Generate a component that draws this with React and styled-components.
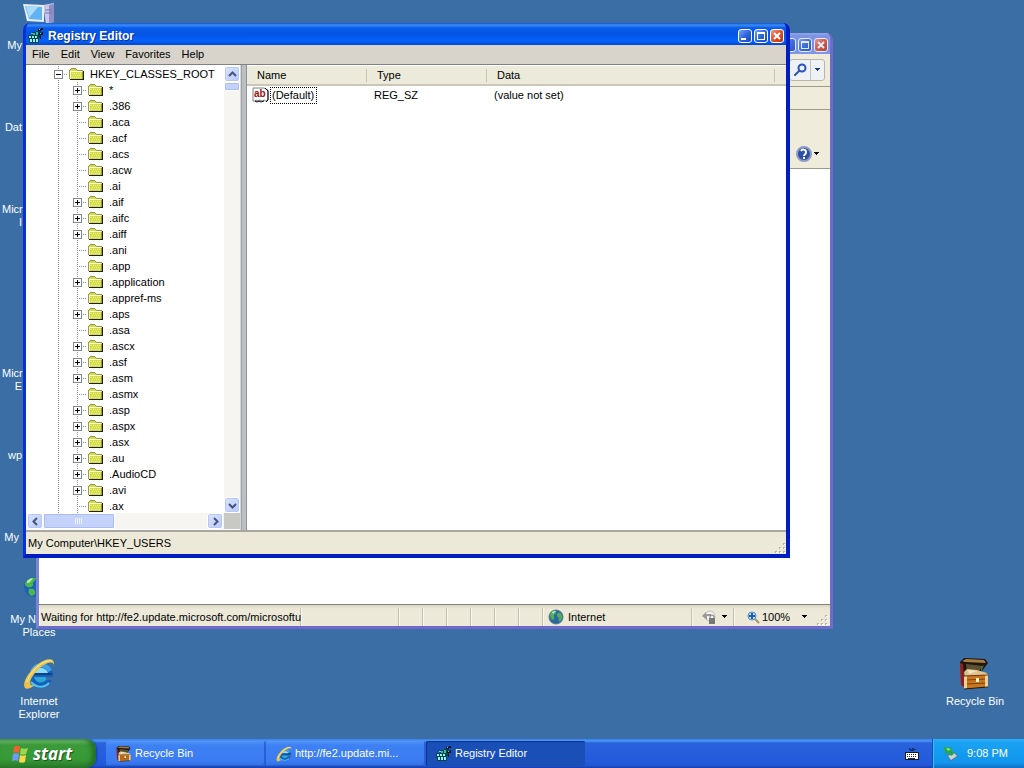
import React, { useState } from 'react';
import styled, { createGlobalStyle } from 'styled-components';

const GlobalStyle = createGlobalStyle`
    * {
        box-sizing: border-box;
    }

    body {
        margin: 0;
        overflow: hidden;
        font-family: "Liberation Sans", Arial, sans-serif;
        font-size: 11px;
        line-height: 13px;
        color: #000000;
    }

    button {
        margin: 0;
        padding: 0;
        border: 0;
        background: none;
        font: inherit;
        color: inherit;
    }
`

const Screen = styled.div`
    display: flex;
    flex-direction: column;
    height: 100vh;
`
const Desktop = styled.main`
    position: relative;
    flex: 1;
    display: flex;
    justify-content: space-between;
    min-height: 0;
    padding: 2px 12px 0 2px;
    overflow: hidden;
    background-color: #3a6ea5;
`
const IconColumn = styled.div`
    display: grid;
    grid-auto-rows: 82px;
    grid-template-columns: 74px;
`
const Shortcut = styled.button`
    grid-row: ${(props) => props.$row || "auto"};
    display: flex;
    flex-direction: column;
    align-items: center;
    color: #ffffff;
    text-align: center;
    white-space: pre;

    svg {
        flex: none;
        margin-bottom: 5px;
    }
`
const Blank = styled.span`
    flex: none;
    height: 37px;
`
const ShortLabel = styled.span`
    align-self: flex-start;
    width: ${(props) => props.width};
    text-align: right;
`

/* windows */
const Window = styled.section`
    position: absolute;
    display: flex;
    flex-direction: column;
    border-radius: 7px 7px 0 0;
    overflow: hidden;
    background-color: #ece9d8;
`
const RegistryWindow = styled(Window)`
    top: 23px;
    left: 23px;
    right: 234px;
    bottom: 181px;
    border-style: solid;
    border-width: 0 4px 4px 3px;
    border-color: #0831d9 #001ec0 #001ec0 #0831d9;
    background-color: #0855dd;
`
const BrowserWindow = styled(Window)`
    top: 33px;
    left: 36px;
    right: 191px;
    bottom: 110px;
    border-style: solid;
    border-width: 0 3px 3px 3px;
    border-color: #7577d4 #6f6acc #6f6acc #7b84dc;
`
const TitleBar = styled.header`
    flex: none;
    display: flex;
    align-items: center;
    gap: 4px;
    height: ${(props) => (props.$faded ? "21px" : "22px")};
    padding: 3px 2px 0 2px;
    background: ${(props) => (props.$faded
        ? "linear-gradient(#8fa5ea 0, #7d93e2 3px, #7a92e2 15px, #8098e8 100%)"
        : "linear-gradient(#0b57d8 0, #3c8cf8 2px, #0a5ce8 5px, #0454e4 11px, #0662fb 18px, #0347cc 100%)")};
`
const Title = styled.h1`
    flex: 1;
    margin: 0;
    font-size: 12px;
    line-height: 16px;
    font-weight: bold;
    color: #ffffff;
    text-shadow: 1px 1px 0 #0a2f86;
`
const Captions = styled.div`
    display: flex;
    gap: 2px;
    margin-left: auto;
    opacity: ${(props) => (props.$faded ? 0.8 : 1)};
`
const CaptionButton = styled.button`
    display: flex;
    align-items: center;
    justify-content: center;
    width: 14px;
    height: 14px;
    border: 1px solid #ffffff;
    border-radius: 3px;
    background: ${(props) => (props.$close
        ? "linear-gradient(135deg, #f09a80, #dd4f26 50%, #b83410)"
        : "linear-gradient(135deg, #7ba2f2, #2f66dd 50%, #1848c0)")};
`
const MenuBar = styled.nav`
    flex: none;
    display: flex;
    align-items: center;
    gap: 11px;
    height: 20px;
    padding: 0 5px 1px 6px;
    border-bottom: 1px solid #808080;
    background-color: #d8d4cb;
`
const Panes = styled.div`
    flex: 1;
    display: flex;
    min-height: 0;
    border-bottom: 2px solid #a8a69e;
    background-color: #c4c3c0;
`
const TreePane = styled.div`
    flex: none;
    display: grid;
    grid-template-columns: 1fr 16px;
    grid-template-rows: 1fr 16px;
    width: 215px;
    padding: 1px 0;
    background-color: #ffffff;
    border-right: 1px solid #d8d8d8;
`
const Tree = styled.ul`
    margin: 0;
    padding: 0 0 0 23px;
    min-height: 0;
    overflow: hidden;
    list-style: none;
`
const TreeRow = styled.li`
    display: flex;
    align-items: center;
    height: 16px;
    white-space: nowrap;
`
const Branch = styled.span`
    flex: none;
    display: flex;
    align-items: center;
    justify-content: center;
    width: 19px;
    height: 16px;
    background-image:
        repeating-linear-gradient(#909090 0 1px, transparent 1px 2px),
        repeating-linear-gradient(90deg, #909090 0 1px, transparent 1px 2px);
    background-repeat: no-repeat;
    background-position: 9px 0, 9px 8px;
    background-size: 1px 100%, ${(props) => (props.$through ? "0 0" : "10px 1px")};
`
const Expander = styled.button`
    display: flex;
    width: 9px;
    height: 9px;
`
const TreeLabel = styled.span`
    padding-left: 5px;
`
const FolderSlot = styled.span`
    display: flex;
    width: 17px;
    padding-left: 1px;
`
const ScrollTrack = styled.div`
    display: flex;
    flex-direction: ${(props) => (props.$across ? "row" : "column")};
    min-width: 0;
    min-height: 0;
    padding: ${(props) => (props.$across ? "0 1px" : "0")};
    background-color: #f6f5f1;
`
const ScrollButton = styled.button`
    flex: none;
    display: flex;
    align-items: center;
    justify-content: center;
    width: 16px;
    height: 16px;
    border: 1px solid #ffffff;
    border-radius: 3px;
    background: linear-gradient(135deg, #dbe4fe, #b9c9f8);
    box-shadow: inset 0 0 0 1px #b8c8f4;
`
const ScrollThumb = styled.div`
    display: flex;
    align-items: center;
    justify-content: center;
    width: ${(props) => (props.$across ? "72px" : "16px")};
    height: ${(props) => (props.$across ? "16px" : "9px")};
    border: 1px solid #ffffff;
    border-radius: 2px;
    background-color: #c4d2fc;
    box-shadow: inset 0 0 0 1px #a9bdee;
`
const ScrollGap = styled.div`
    flex: 1;
`
const Corner = styled.div`
    background-color: #c8c8c4;
`
const Splitter = styled.div`
    flex: none;
    width: 6px;
    border-right: 1px solid #8c949c;
    border-left: 1px solid #9ca0a4;
    background-color: #bcc0c4;
`
const ListPane = styled.div`
    flex: 1;
    min-width: 0;
    padding-top: 1px;
    background-color: #ffffff;
`
const ValueTable = styled.table`
    width: 100%;
    table-layout: fixed;
    border-collapse: separate;
    border-spacing: 0;
`
const Th = styled.th`
    width: ${(props) => (props.width ? props.width : "auto")};
    height: 20px;
    padding: 0 0 0 10px;
    text-align: start;
    font-weight: normal;
    border-bottom: 2px solid #cbc7b8;
    background:
        linear-gradient(#c8c5b2, #c8c5b2) right 3px / ${(props) => (props.width ? "1px" : "0")} 13px no-repeat,
        #ebeadb;
`
const Td = styled.td`
    height: 18px;
    padding: 0 0 0 ${(props) => (props.$icon ? "5px" : "7px")};
`
const ValueName = styled.div`
    display: flex;
    align-items: center;
    gap: 1px;
`
const Focused = styled.span`
    padding: 1px 2px 1px 1px;
    border: 1px dotted #000000;
`
const StatusBar = styled.footer`
    flex: none;
    display: flex;
    align-items: center;
    justify-content: space-between;
    height: 22px;
    padding: 0 0 0 2px;
    background-color: #ece9d8;
`

/* browser window */
const BrowserBar = styled.div`
    flex: none;
    display: flex;
    align-items: center;
    justify-content: flex-end;
    height: ${(props) => props.$height};
    padding: ${(props) => props.$pad || "0 5px"};
    border-bottom: 1px solid #9c9a8c;
    background-color: #efecdc;
`
const SearchSplit = styled.div`
    display: flex;
    height: 22px;
    border: 1px solid #b8b6a8;
    border-radius: 3px;
    background-color: #eef2f4;
`
const SearchButton = styled.button`
    display: flex;
    align-items: center;
    justify-content: center;
    width: ${(props) => (props.$narrow ? "14px" : "20px")};
    border-left: ${(props) => (props.$narrow ? "1px solid #b8c4cc" : "0")};
`
const HelpButton = styled.button`
    display: flex;
    align-items: center;
    gap: 1px;
`
const PageArea = styled.div`
    flex: 1;
    background-color: #ffffff;
`
const BrowserStatus = styled.footer`
    flex: none;
    display: flex;
    height: 22px;
    padding-top: 3px;
    border-top: 1px solid #85837a;
    background: linear-gradient(#d9d6c8, #ece9d8 4px);
`
const StatusPanel = styled.div`
    flex: ${(props) => (props.$width ? "none" : 1)};
    display: flex;
    align-items: center;
    gap: 4px;
    width: ${(props) => props.$width || "auto"};
    min-width: 0;
    padding-left: ${(props) => props.$pad || "2px"};
    white-space: nowrap;
    border-right: ${(props) => (props.$last ? "0" : "1px solid #c3c0af")};
    box-shadow: inset 1px 0 0 #f8f7ef;
`
const ZoomButton = styled.button`
    display: flex;
    align-items: center;
    gap: 2px;
`
const Push = styled.span`
    margin-left: ${(props) => props.$by};
    display: flex;
    align-self: ${(props) => (props.$end ? "flex-end" : "center")};
`

/* taskbar */
const Taskbar = styled.footer`
    flex: none;
    display: flex;
    height: 29px;
    color: #ffffff;
    background: linear-gradient(#3a80ee 0, #4a94f6 2px, #2a62dc 4px, #245bdb 20px, #2258d8 26px, #163fae 100%);
`
const StartButton = styled.button`
    display: flex;
    align-items: center;
    gap: 4px;
    width: 96px;
    padding-left: 10px;
    border-radius: 0 10px 10px 0;
    background: linear-gradient(#5cab5c 0, #66b866 2px, #3a9a3a 6px, #379a36 20px, #2b7d2b 100%);
    box-shadow: inset -4px 0 5px #256d25, 1px 0 2px #173fa8;
    font-family: "Open Sans", "Liberation Sans", sans-serif;
    font-size: 17px;
    line-height: 22px;
    font-weight: bold;
    font-style: italic;
    text-shadow: 1px 1px 1px #204c20;
`
const TaskList = styled.div`
    flex: 1;
    display: flex;
    gap: 1px;
    padding: 2px 0 2px 10px;
`
const TaskButton = styled.button`
    display: flex;
    align-items: center;
    gap: 3px;
    width: 159px;
    padding-left: 10px;
    border-radius: 2px;
    background: ${(props) => (props.$active
        ? "#1b4fb8"
        : "linear-gradient(#5596f8 0, #3d81f4 4px, #3b7bf2 20px, #326ee4 100%)")};
    box-shadow: ${(props) => (props.$active
        ? "inset 1px 1px 1px #0f3588"
        : "inset -1px -1px 0 #2a5fd0")};
`
const TaskText = styled.span`
    width: 118px;
    text-align: left;
    white-space: nowrap;
    overflow: hidden;
    text-overflow: ellipsis;
`
const Language = styled.button`
    display: flex;
    align-items: center;
    width: 27px;
`
const Tray = styled.div`
    display: flex;
    align-items: center;
    gap: 8px;
    width: 92px;
    padding-left: 10px;
    border-left: 1px solid #0d4fb8;
    background: linear-gradient(#2ab0f8 0, #1ba2f4 3px, #129aef 16px, #1294ec 24px, #0d70c4 100%);
    box-shadow: inset 1px 0 0 #38c0fa;
`

const keys = [
    { name: '*', open: true },
    { name: '.386', open: true },
    { name: '.aca' },
    { name: '.acf' },
    { name: '.acs' },
    { name: '.acw' },
    { name: '.ai' },
    { name: '.aif', open: true },
    { name: '.aifc', open: true },
    { name: '.aiff', open: true },
    { name: '.ani' },
    { name: '.app' },
    { name: '.application', open: true },
    { name: '.appref-ms' },
    { name: '.aps', open: true },
    { name: '.asa' },
    { name: '.ascx', open: true },
    { name: '.asf', open: true },
    { name: '.asm', open: true },
    { name: '.asmx' },
    { name: '.asp', open: true },
    { name: '.aspx', open: true },
    { name: '.asx', open: true },
    { name: '.au', open: true },
    { name: '.AudioCD', open: true },
    { name: '.avi', open: true },
    { name: '.ax' },
]

const ComputerIcon = () => (
    <svg width="32" height="32" viewBox="0 0 32 32">
        <path d="M20 3l11-2v19l-8 2z" fill="#c9c6ea" />
        <path d="M26 3l5-1v18l-5 1z" fill="#8e8fc4" />
        <path d="M0 2l21 1v17l-17-1z" fill="#e9ecfb" />
        <path d="M2 4l17 1v13l-13-1z" fill="#62b4f0" />
        <path d="M3 4l12 1-9 11z" fill="#a9ddfb" />
        <path d="M22 8h7M22 11h7" stroke="#7779b2" />
    </svg>
)
const NetworkIcon = () => (
    <svg width="32" height="32" viewBox="0 0 32 32">
        <circle cx="11" cy="11" r="10" fill="#1d62bd" />
        <path d="M2 7c3-5 7-6 11-5-1 4-4 4-3 6s-3 4-5 3-3-1-3-4zM6 13c4-1 7 1 6 5l-3 2c-3-1-4-4-3-7z" fill="#4cb848" />
        <path d="M4 5c2-2 4-3 6-3-2 3-3 5-6 5z" fill="#b9ecb0" />
    </svg>
)
const BrowserIcon = ({ size }) => (
    <svg width={size} height={size} viewBox="0 0 32 32">
        <circle cx="18" cy="17" r="12" fill="#1560b8" />
        <path d="M7 13a12 12 0 0 1 22-1l-4 2c-3-6-12-6-14 1z" fill="#3f9fe8" />
        <path d="M11 15c1-6 12-7 14 0z" fill="#8adcf8" />
        <path d="M11 19h19v2h-6c-3 5-11 5-13-2z" fill="#2aa8dc" />
        <path d="M11 16h18" stroke="#123f8c" strokeWidth="2" />
        <path d="M23 22h8v-3h-8z" fill="#3a6ea5" />
        <path d="M8 24c5 6 13 6 18 1" stroke="#4cc4f4" strokeWidth="2" fill="none" />
        <path d="M31 7c1-8-8-7-16-1C7 12-2 25 2 30c2 2 6 0 10-3-7 2-6-5 0-12C19 7 29 1 31 7z" fill="#e8c250" />
        <path d="M29 3C21 1 8 12 4 24" stroke="#fdeea0" fill="none" />
    </svg>
)
const ChestIcon = ({ size }) => (
    <svg width={size} height={size} viewBox="0 0 32 32">
        <path d="M1 4l4-4 21 1 3 4-6 8L4 15z" fill="#1c1510" />
        <path d="M3 3l4-2 18 1 2 3-21-1z" fill="#a87b3e" />
        <path d="M1 5l3 1 1 10 1 14-4-3z" fill="#8e1f1c" />
        <path d="M7 6l17 2-4 5H8z" fill="#5b5132" />
        <path d="M5 14l3-3 10 1 10 3-2 3H6z" fill="#dfc28e" />
        <path d="M9 12l9 1-8 3z" fill="#f3e4c0" />
        <path d="M5 18l24-1v12L6 31z" fill="#c8771f" />
        <path d="M7 22l21-1M7 26l21-1" stroke="#7d3f0e" />
        <path d="M5 18h3v13H5zM26 16h3v13l-3 1z" fill="#ecd09a" />
        <path d="M5 18l24-1" stroke="#6b3510" strokeWidth="1" />
        <path d="M17 20h3v4h-3z" fill="#fff0bc" />
        <path d="M5 31l24-2" stroke="#20140a" />
        <path d="M22 9l3-2-3 7z" fill="#3b7c2a" />
    </svg>
)
const RegistryIcon = () => (
    <svg width="16" height="16" viewBox="0 0 16 16" shapeRendering="crispEdges">
        <path d="M0 7h4V4h4V3h5v7h-2v5H1z" fill="#0a4448" />
        <path d="M1 8h2v2H1zM4 8h2v2H4zM7 8h2v2H7zM2 11h2v3H2zM5 11h2v3H5zM8 11h2v3H8z" fill="#8cf0ec" />
        <path d="M5 5h2v2H5zM8 4h2v3H8z" fill="#38b8b4" />
        <path d="M10 1h3v2h-3zM13 0h2v2h-2zM11 5h3v2h-3zM14 4h1v3h-1zM12 8h1v3h-1z" fill="#0a1414" />
        <path d="M11 1h1v1h-1zM12 5h1v1h-1zM3 5h2v1H3z" fill="#58d4d0" />
    </svg>
)
const FolderIcon = () => (
    <svg width="16" height="14" viewBox="0 0 16 14" shapeRendering="crispEdges">
        <path d="M1 2h1V1h5v1h1v1h6v10H1z" fill="#d4dc48" />
        <path d="M0 3h1v9H0zM1 2h1v1H1zM2 1h5v1H2zM7 2h1v1H7zM8 3h6v1H8z" fill="#98984c" />
        <path d="M1 4h12v1H2v7H1z" fill="#fcfcd0" />
        <path d="M3 6h1v1H3zM5 6h1v1H5zM7 6h1v1H7zM9 6h1v1H9zM11 6h1v1h-1zM4 8h1v1H4zM6 8h1v1H6zM8 8h1v1H8zM10 8h1v1h-1zM3 10h1v1H3zM5 10h1v1H5zM7 10h1v1H7zM9 10h1v1H9zM11 10h1v1h-1z" fill="#f0f49c" />
        <path d="M14 4h1v9h-1zM1 12h14v1H1z" fill="#202008" />
        <path d="M13 5h1v7h-1z" fill="#98983c" />
    </svg>
)
const ToggleIcon = ({ minus }) => (
    <svg width="9" height="9" viewBox="0 0 9 9" shapeRendering="crispEdges">
        <path d="M0 0h9v9H0z" fill="#848890" />
        <path d="M1 1h7v7H1z" fill="#ffffff" />
        <path d={minus ? "M2 4h5v1H2z" : "M2 4h5v1H2zM4 2h1v5H4z"} fill="#000000" />
    </svg>
)
const StringIcon = () => (
    <svg width="17" height="16" viewBox="0 0 17 16">
        <path d="M1 1h11l4 2v10l-2 1-2-1-2 1-2-1-2 1-2-1-1 1H1z" fill="#ffffff" stroke="#808080" />
        <path d="M13 1l3 3v9l-2 2M3 14l2 1 2-1 2 1 3-1" stroke="#000000" fill="none" />
        <text x="2" y="10" fontFamily="Liberation Sans" fontSize="10" fontWeight="bold" fill="#a01010">ab</text>
    </svg>
)
const ArrowIcon = ({ turn }) => (
    <svg width="9" height="9" viewBox="0 0 9 9">
        <path d="M1 6l3.500-3.500L8 6" stroke="#42557f" strokeWidth="2" fill="none" transform={`rotate(${turn} 4.500 4.500)`} />
    </svg>
)
const CaretIcon = ({ color }) => (
    <svg width="7" height="4" viewBox="0 0 7 4" shapeRendering="crispEdges">
        <path d="M1 0h5v1H1zM2 1h3v1H2zM3 2h1v1H3z" fill={color} />
    </svg>
)
const SearchIcon = () => (
    <svg width="14" height="14" viewBox="0 0 14 14">
        <circle cx="9" cy="5" r="3.500" stroke="#2c50b8" strokeWidth="2" fill="#e8f2ff" />
        <path d="M6 8l-4 4" stroke="#2c50b8" strokeWidth="2" strokeLinecap="round" />
    </svg>
)
const HelpIcon = () => (
    <svg width="16" height="16" viewBox="0 0 16 16">
        <circle cx="8" cy="8" r="7" fill="#2c4fa8" stroke="#8c9cc4" strokeWidth="2" />
        <path d="M5 5c1-2 5-2 5 1s-2 2-2 4" stroke="#ffffff" strokeWidth="2" fill="none" />
        <path d="M7 11h2v2H7z" fill="#ffffff" />
    </svg>
)
const GlobeIcon = () => (
    <svg width="16" height="16" viewBox="0 0 16 16">
        <circle cx="8" cy="8" r="7" fill="#2a6a9e" stroke="#53798e" />
        <path d="M2 5c2-4 5-4 6-3S7 5 6 6s1 2 0 4-4 0-4-5zM10 4c2-1 4 1 4 4s-2 5-3 4 1-3-1-4-1-3 0-4z" fill="#56ad5a" />
        <path d="M4 3c2-1 3-1 4-1L5 5z" fill="#c8ecd8" />
    </svg>
)
const PrivacyIcon = () => (
    <svg width="16" height="16" viewBox="0 0 16 16">
        <circle cx="9" cy="7" r="5" fill="#f2f1ea" stroke="#c0bfb8" />
        <path d="M1 7l4-4v2h5v2H6v4z" fill="#9a9a96" />
        <path d="M9 10V8a2 2 0 0 1 4 0v2" stroke="#777777" fill="none" />
        <path d="M8 9h6v6H8z" fill="#777777" />
    </svg>
)
const ZoomIcon = () => (
    <svg width="13" height="13" viewBox="0 0 13 13">
        <path d="M8 8l4 4" stroke="#a89468" strokeWidth="2" />
        <circle cx="5" cy="5" r="4" fill="#cde4fa" stroke="#4a84c8" />
        <path d="M5 2v6M2 5h6" stroke="#1c5cb4" strokeWidth="2" />
    </svg>
)
const GripIcon = () => (
    <svg width="12" height="12" viewBox="0 0 12 12" shapeRendering="crispEdges">
        <path d="M9 1h2v2H9zM5 5h2v2H5zM9 5h2v2H9zM1 9h2v2H1zM5 9h2v2H5zM9 9h2v2H9z" fill="#b8b4a2" />
        <path d="M10 2h2v1h-2zM6 6h2v1H6zM10 6h2v1h-2zM2 10h2v1H2zM6 10h2v1H6zM10 10h2v1h-2z" fill="#ffffff" />
    </svg>
)
const FlagIcon = () => (
    <svg width="19" height="18" viewBox="0 0 19 18">
        <path d="M4 2c2-2 4-1 6 0L9 8c-2-1-4-1-6 0z" fill="#f2602e" />
        <path d="M11 3c2 1 4 1 7 0l-2 6c-2 1-4 1-6 0z" fill="#9cd84c" />
        <path d="M3 9c2-1 4-1 6 0l-1 7c-2-1-4-1-6 0z" fill="#6c9cf8" />
        <path d="M10 10c2 1 4 1 6 0l-1 7c-2 1-4 1-6 0z" fill="#fdd648" />
    </svg>
)
const KeyboardIcon = () => (
    <svg width="14" height="14" viewBox="0 0 14 14" shapeRendering="crispEdges">
        <path d="M4 1h1v1h2V1h2v1h2v1H9v1H5V3H4z" fill="#18306c" />
        <path d="M0 5h14v8H0z" fill="#101828" />
        <path d="M1 6h12v6H1z" fill="#ffffff" />
        <path d="M2 7h1v1H2zM4 7h1v1H4zM6 7h1v1H6zM8 7h1v1H8zM10 7h1v1h-1zM2 9h1v1H2zM4 9h1v1H4zM6 9h1v1H6zM8 9h1v1H8zM10 9h1v1h-1zM3 11h7v1H3z" fill="#202838" />
    </svg>
)
const SafeRemoveIcon = () => (
    <svg width="16" height="16" viewBox="0 0 16 16">
        <path d="M4 10l7-4 4 4-7 5z" fill="#5e7078" />
        <path d="M5 10l6-3 3 3-6 4z" fill="#c8d4d8" />
        <path d="M1 1l9 1-2 2 3 4-3 2-3-4-2 3z" fill="#28a838" />
        <path d="M3 2l5 1-3 2z" fill="#90e890" />
    </svg>
)

const CaptionButtons = ({ faded }) => (
    <Captions $faded={faded}>
        <CaptionButton aria-label="Minimize">
            <svg width="10" height="10"><path d="M1 7h5v2H1z" fill="#ffffff" /></svg>
        </CaptionButton>
        <CaptionButton aria-label="Maximize">
            <svg width="10" height="10"><path d="M1 1h8v8H1zM2 3v5h6V3z" fill="#ffffff" fillRule="evenodd" /></svg>
        </CaptionButton>
        <CaptionButton $close aria-label="Close">
            <svg width="10" height="10"><path d="M2 2l6 6M8 2l-6 6" stroke="#ffffff" strokeWidth="2" /></svg>
        </CaptionButton>
    </Captions>
)

const Browser = () => (
    <BrowserWindow>
        <TitleBar $faded>
            <CaptionButtons faded />
        </TitleBar>
        <BrowserBar $height="33px">
            <SearchSplit>
                <SearchButton aria-label="Search"><SearchIcon /></SearchButton>
                <SearchButton $narrow aria-label="Search options"><CaretIcon color="#1c3c8c" /></SearchButton>
            </SearchSplit>
        </BrowserBar>
        <BrowserBar $height="23px" />
        <BrowserBar $height="59px" $pad="30px 10px 0 0">
            <HelpButton aria-label="Help">
                <HelpIcon />
                <CaretIcon color="#000000" />
            </HelpButton>
        </BrowserBar>
        <PageArea />
        <BrowserStatus>
            <StatusPanel>Waiting for http://fe2.update.microsoft.com/microsoftu</StatusPanel>
            <StatusPanel $width="98px" />
            {[1, 2, 3, 4, 5, 6].map((item) => (
                <StatusPanel key={item} $width="24px" />
            ))}
            <StatusPanel $width="149px" $pad="5px">
                <GlobeIcon />
                Internet
            </StatusPanel>
            <StatusPanel $width="42px" $pad="9px">
                <PrivacyIcon />
                <CaretIcon color="#000000" />
            </StatusPanel>
            <StatusPanel $width="96px" $pad="13px" $last>
                <ZoomButton>
                    <ZoomIcon />
                    100%
                    <Push $by="9px"><CaretIcon color="#000000" /></Push>
                </ZoomButton>
                <Push $by="4px" $end><GripIcon /></Push>
            </StatusPanel>
        </BrowserStatus>
    </BrowserWindow>
)

const RegistryEditor = () => {
    const [expanded, setExpanded] = useState(true)

    return (
        <RegistryWindow>
            <TitleBar>
                <RegistryIcon />
                <Title>Registry Editor</Title>
                <CaptionButtons />
            </TitleBar>
            <MenuBar>
                {['File', 'Edit', 'View', 'Favorites', 'Help'].map((item) => (
                    <button key={item}>{item}</button>
                ))}
            </MenuBar>
            <Panes>
                <TreePane>
                    <Tree>
                        <TreeRow>
                            <Branch>
                                <Expander aria-label="Toggle HKEY_CLASSES_ROOT" onClick={() => setExpanded(!expanded)}>
                                    <ToggleIcon minus={expanded} />
                                </Expander>
                            </Branch>
                            <FolderSlot><FolderIcon /></FolderSlot>
                            <TreeLabel>HKEY_CLASSES_ROOT</TreeLabel>
                        </TreeRow>
                        {expanded && keys.map((item) => (
                            <TreeRow key={item.name}>
                                <Branch $through />
                                <Branch>
                                    {item.open && (
                                        <Expander aria-label={"Expand " + item.name}><ToggleIcon /></Expander>
                                    )}
                                </Branch>
                                <FolderSlot><FolderIcon /></FolderSlot>
                                <TreeLabel>{item.name}</TreeLabel>
                            </TreeRow>
                        ))}
                    </Tree>
                    <ScrollTrack>
                        <ScrollButton aria-label="Scroll up"><ArrowIcon turn={0} /></ScrollButton>
                        <ScrollThumb />
                        <ScrollGap />
                        <ScrollButton aria-label="Scroll down"><ArrowIcon turn={180} /></ScrollButton>
                    </ScrollTrack>
                    <ScrollTrack $across>
                        <ScrollButton aria-label="Scroll left"><ArrowIcon turn={270} /></ScrollButton>
                        <ScrollThumb $across>
                            <svg width="8" height="6"><path d="M0 0h1v6H0zM2 0h1v6H2zM4 0h1v6H4zM6 0h1v6H6z" fill="#eef4fe" /></svg>
                        </ScrollThumb>
                        <ScrollGap />
                        <ScrollButton aria-label="Scroll right"><ArrowIcon turn={90} /></ScrollButton>
                    </ScrollTrack>
                    <Corner />
                </TreePane>
                <Splitter />
                <ListPane>
                    <ValueTable>
                        <thead>
                            <tr>
                                <Th width="120px">Name</Th>
                                <Th width="120px">Type</Th>
                                <Th width="288px">Data</Th>
                                <Th></Th>
                            </tr>
                        </thead>
                        <tbody>
                            <tr>
                                <Td $icon>
                                    <ValueName>
                                        <StringIcon />
                                        <Focused>(Default)</Focused>
                                    </ValueName>
                                </Td>
                                <Td>REG_SZ</Td>
                                <Td>(value not set)</Td>
                                <Td></Td>
                            </tr>
                        </tbody>
                    </ValueTable>
                </ListPane>
            </Panes>
            <StatusBar>
                My Computer\HKEY_USERS
                <Push $by="0" $end><GripIcon /></Push>
            </StatusBar>
        </RegistryWindow>
    )
}

const App = () => (
    <Screen>
        <GlobalStyle />
        <Desktop>
            <IconColumn>
                <Shortcut $row={1}><ComputerIcon /><ShortLabel width="20px">My</ShortLabel></Shortcut>
                <Shortcut $row={2}><Blank /><ShortLabel width="20px">Dat</ShortLabel></Shortcut>
                <Shortcut $row={3}><Blank /><ShortLabel width="20px">{'Micr\nI'}</ShortLabel></Shortcut>
                <Shortcut $row={5}><Blank /><ShortLabel width="20px">{'Micr\nE'}</ShortLabel></Shortcut>
                <Shortcut $row={6}><Blank /><ShortLabel width="20px">wp</ShortLabel></Shortcut>
                <Shortcut $row={7}><Blank /><ShortLabel width="17px">My</ShortLabel></Shortcut>
                <Shortcut $row={8}><NetworkIcon /><ShortLabel width="34px">My N</ShortLabel>Places</Shortcut>
                <Shortcut $row={9}><BrowserIcon size={32} />{'Internet\nExplorer'}</Shortcut>
            </IconColumn>
            <IconColumn>
                <Shortcut $row={9}><ChestIcon size={32} />Recycle Bin</Shortcut>
            </IconColumn>
            <Browser />
            <RegistryEditor />
        </Desktop>
        <Taskbar>
            <StartButton><FlagIcon />start</StartButton>
            <TaskList>
                <TaskButton><ChestIcon size={16} /><TaskText>Recycle Bin</TaskText></TaskButton>
                <TaskButton><BrowserIcon size={16} /><TaskText>http://fe2.update.mi...</TaskText></TaskButton>
                <TaskButton $active><RegistryIcon /><TaskText>Registry Editor</TaskText></TaskButton>
            </TaskList>
            <Language aria-label="Language bar"><KeyboardIcon /></Language>
            <Tray>
                <SafeRemoveIcon />
                9:08 PM
            </Tray>
        </Taskbar>
    </Screen>
)

export default App
